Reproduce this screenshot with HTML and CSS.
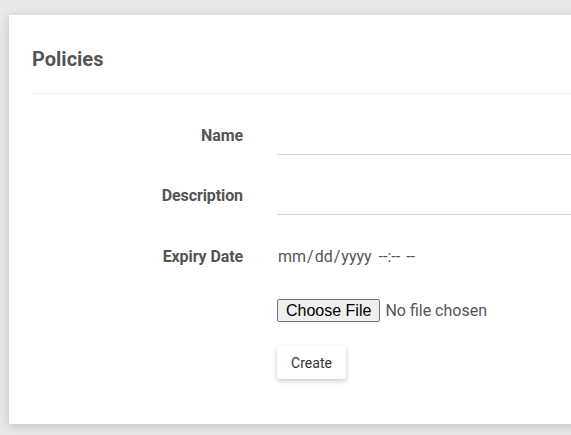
FILE: index.html
```html
<!DOCTYPE html>
<html>
<head>
<meta charset="utf-8">
<link rel="stylesheet" href="styles.css">
</head>
<body>
<div class="page">
  <div class="card">
    <h1 class="title">Policies</h1>
    <form class="form">
      <div class="row">
        <label class="label" for="name">Name</label>
        <input class="line-input" id="name" type="text">
      </div>
      <div class="row">
        <label class="label" for="desc">Description</label>
        <input class="line-input" id="desc" type="text">
      </div>
      <div class="row row-date">
        <label class="label">Expiry Date</label>
        <span class="date-field"><span class="seg">mm</span><span class="sep">/</span><span class="seg">dd</span><span class="sep">/</span><span class="seg">yyyy</span><span class="seg time">--:--</span><span class="seg ampm">--</span></span>
      </div>
      <div class="row row-file">
        <span class="label"></span>
        <input class="file-input" type="file">
      </div>
      <div class="row row-btn">
        <span class="label"></span>
        <button class="create-btn" type="button">Create</button>
      </div>
    </form>
  </div>
</div>
</body>
</html>
```

FILE: styles.css
```css
html, body {
  margin: 0;
  padding: 0;
  background: #e8e8e8;
  overflow: hidden;
  height: 100%;
}
.page {
  padding: 15px 0 0 9px;
  font-family: Roboto, "Liberation Sans", sans-serif;
}
.card {
  background: #fff;
  margin-right: -60px;
  padding: 32px 0 45px 23px;
  box-shadow: 0 2px 10px rgba(0, 0, 0, 0.16);
}
.title {
  margin: 0;
  font-size: 20px;
  line-height: 24px;
  font-weight: 700;
  color: #555;
  padding-bottom: 22px;
  border-bottom: 1px solid #eee;
}
.form {
  display: flex;
  flex-direction: column;
  gap: 20px;
  padding-top: 21px;
}
.row {
  display: flex;
  align-items: center;
  gap: 34px;
}
.row-date {
  align-items: baseline;
  padding-top: 7px;
  height: 40px;
  box-sizing: border-box;
}
.row-file {
  margin-top: 4px;
}
.row-btn {
  margin-top: 4px;
}
.label {
  flex: 0 0 211px;
  text-align: right;
  font-size: 16px;
  font-weight: 700;
  color: #555;
  letter-spacing: -0.1px;
}
.line-input {
  flex: 1;
  height: 40px;
  box-sizing: border-box;
  border: none;
  border-bottom: 1px solid #d4d4d4;
  outline: none;
  font: 16px Roboto, sans-serif;
  padding: 0;
}
.date-field {
  line-height: 30px;
  font-size: 16px;
  color: #555;
  padding-left: 1px;
  white-space: pre;
}
.sep {
  margin: 0 1px;
}
.time {
  margin-left: 7px;
}
.ampm {
  margin-left: 6px;
}
.file-input {
  font: 16px Roboto, sans-serif;
  color: #555;
  margin: 0;
  height: 23px;
}
.file-input::file-selector-button {
  font: 16px "Liberation Sans", Arial, sans-serif;
  color: #000;
  background: #efefef;
  border: 1px solid #767676;
  border-radius: 2px;
  height: 23px;
  padding: 0 8px;
  margin-right: 5px;
}
.create-btn {
  width: 69px;
  height: 33px;
  background: #fff;
  border: none;
  border-radius: 2px;
  box-shadow: 0 2px 5px rgba(0, 0, 0, 0.22);
  font: 14px Roboto, sans-serif;
  color: #333;
  padding: 0;
}
```
